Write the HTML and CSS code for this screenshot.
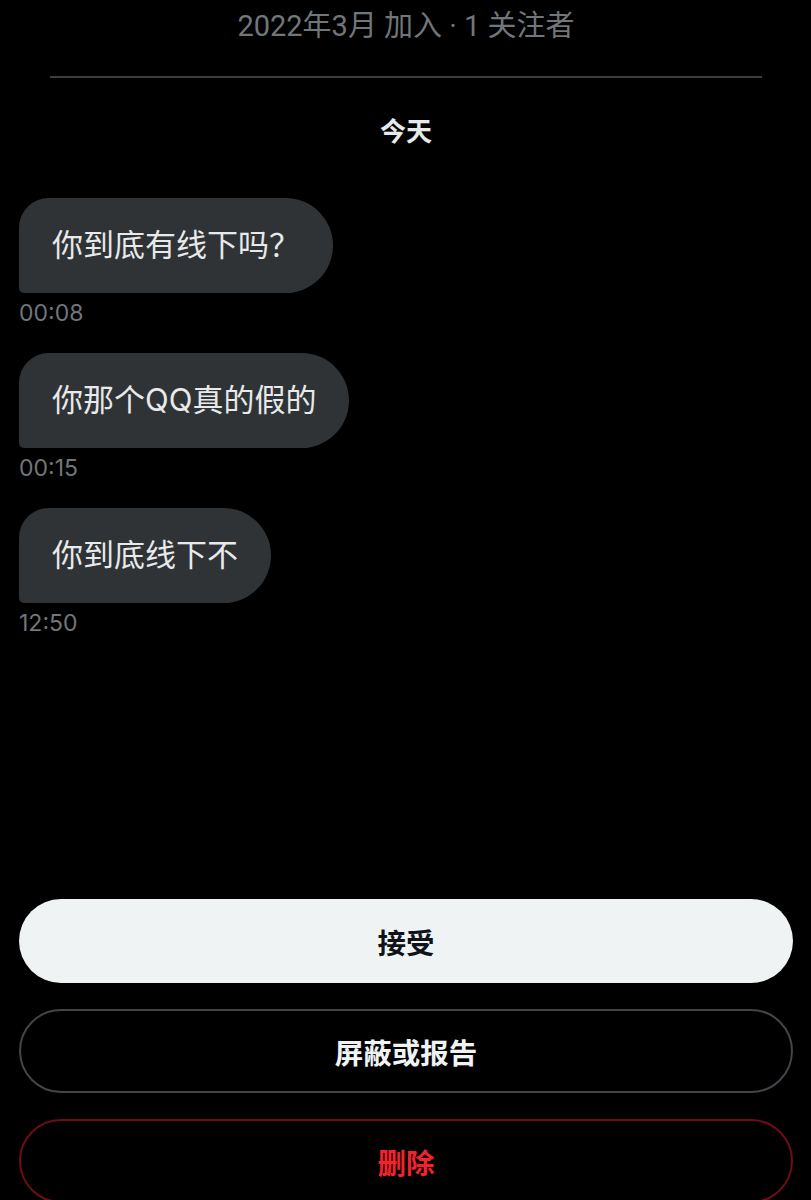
FILE: index.html
```html
<!DOCTYPE html>
<html lang="zh-CN">
<head>
    <meta charset="UTF-8">
    <meta name="viewport" content="width=device-width, initial-scale=1.0">
    <title>消息请求</title>
    <link rel="stylesheet" href="styles.css">
</head>
<body>

<div class="profile-meta">2022年3月 加入 · 1 关注者</div>
<div class="divider"></div>

<div class="day-label">今天</div>

<div class="messages">
    <div class="message">
        <div class="bubble">你到底有线下吗？</div>
        <div class="time">00:08</div>
    </div>
    <div class="message">
        <div class="bubble">你那个QQ真的假的</div>
        <div class="time">00:15</div>
    </div>
    <div class="message">
        <div class="bubble">你到底线下不</div>
        <div class="time">12:50</div>
    </div>
</div>

<div class="actions">
    <button class="btn btn-accept">接受</button>
    <button class="btn btn-block">屏蔽或报告</button>
    <button class="btn btn-delete">删除</button>
</div>

</body>
</html>
```

FILE: styles.css
```css
body {
    margin: 0;
    padding: 0 18px 0 19px;
    background-color: #000;
    color: #e7e9ea;
    font-family: Inter, "Noto Sans CJK SC", sans-serif;
}

.profile-meta {
    font-family: Roboto, "Noto Sans CJK SC", sans-serif;
    font-size: 29px;
    line-height: 52px;
    color: #71767b;
    text-align: center;
}

.divider {
    height: 2px;
    margin: 24px 31px 0 31px;
    background-color: #3a3d40;
}

.day-label {
    margin-top: 40px;
    font-size: 26px;
    font-weight: 700;
    line-height: 28px;
    text-align: center;
    color: #e7e9ea;
}

.messages {
    margin-top: 52px;
    display: flex;
    flex-direction: column;
    gap: 25px;
}

.message {
    display: flex;
    flex-direction: column;
    align-items: flex-start;
}

.bubble {
    background-color: #2f3336;
    font-size: 31px;
    line-height: 40px;
    padding: 27px 33px 28px 33px;
    border-radius: 30px 48px 48px 5px;
}

.time {
    margin-top: 5px;
    font-size: 23px;
    line-height: 30px;
    color: #71767b;
}

.actions {
    margin-top: 261px;
    display: flex;
    flex-direction: column;
    gap: 26px;
}

.btn {
    height: 84px;
    border-radius: 42px;
    font-family: Inter, "Noto Sans CJK SC", sans-serif;
    font-size: 28.5px;
    font-weight: 700;
    background: transparent;
    cursor: pointer;
}

.btn-accept {
    background-color: #eff3f4;
    border: none;
    color: #0f1419;
}

.btn-block {
    border: 2px solid #42464a;
    color: #eff3f4;
}

.btn-delete {
    border: 2px solid #6e0c18;
    color: #f4212e;
}
```
